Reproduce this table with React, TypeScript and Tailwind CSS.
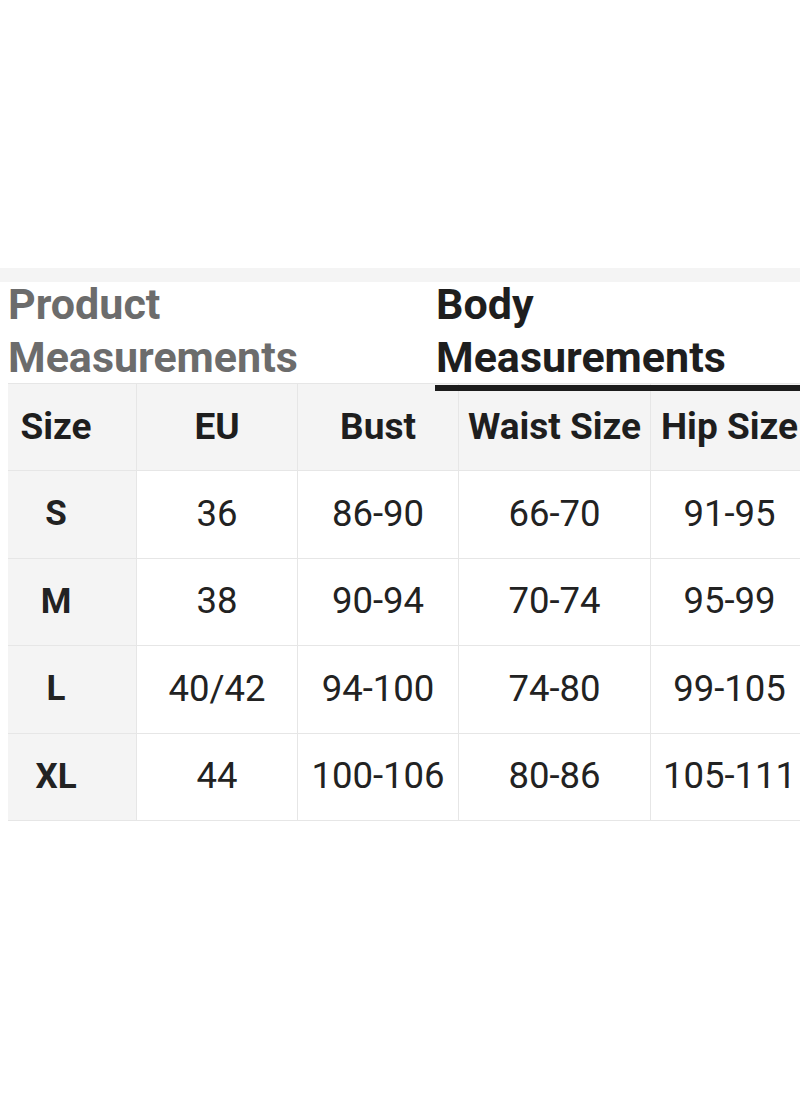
import React from "react";

const cols = [128, 161, 161, 192, 158];
const header = ["Size", "EU", "Bust", "Waist Size", "Hip Size"];
const rows = [
  ["S", "36", "86-90", "66-70", "91-95"],
  ["M", "38", "90-94", "70-74", "95-99"],
  ["L", "40/42", "94-100", "74-80", "99-105"],
  ["XL", "44", "100-106", "80-86", "105-111"],
];

export default function App() {
  return (
    <div
      className="w-[800px] h-[1096px] bg-white overflow-hidden"
      style={{ fontFamily: "Roboto, 'Liberation Sans', sans-serif" }}
    >
      <div className="h-[268px]" />
      <div className="h-[14px] bg-[#f4f4f4]" />
      <div className="flex h-[101px] pl-[8px]">
        <div className="w-[428px] text-[43px] leading-[53px] font-bold text-[#6c6c6c] -mt-[4px]">
          Product
          <br />
          Measurements
        </div>
        <div className="flex-1 text-[43px] leading-[53px] font-bold text-[#1e1e1e] -mt-[4px] whitespace-nowrap">
          Body
          <br />
          Measurements
        </div>
      </div>
      <div className="relative pl-[8px]">
        <div className="absolute left-[435px] top-[2px] w-[380px] h-[6px] bg-[#1c1c1c]" />
        <div className="w-[820px] border-t border-[#e6e6e6]">
          <div className="flex h-[87px] border-b border-[#e6e6e6] bg-[#f4f4f4]">
            {header.map((h, i) => (
              <div
                key={h}
                style={{ width: cols[i] }}
                className={`flex items-center justify-center text-[37px] font-bold text-[#1e1e1e] shrink-0 whitespace-nowrap ${
                  i > 0 ? "border-l border-[#e6e6e6]" : "pr-[32px]"
                }`}
              >
                {h}
              </div>
            ))}
          </div>
          {rows.map((r) => (
            <div key={r[0]} className="flex h-[87.5px] border-b border-[#e6e6e6]">
              {r.map((c, i) => (
                <div
                  key={i}
                  style={{ width: cols[i] }}
                  className={`flex items-center justify-center shrink-0 text-[#222] whitespace-nowrap ${
                    i === 0
                      ? "bg-[#f4f4f4] font-bold text-[35px] pr-[32px]"
                      : "bg-white border-l border-[#e6e6e6] text-[36.5px]"
                  }`}
                >
                  {c}
                </div>
              ))}
            </div>
          ))}
        </div>
      </div>
    </div>
  );
}
